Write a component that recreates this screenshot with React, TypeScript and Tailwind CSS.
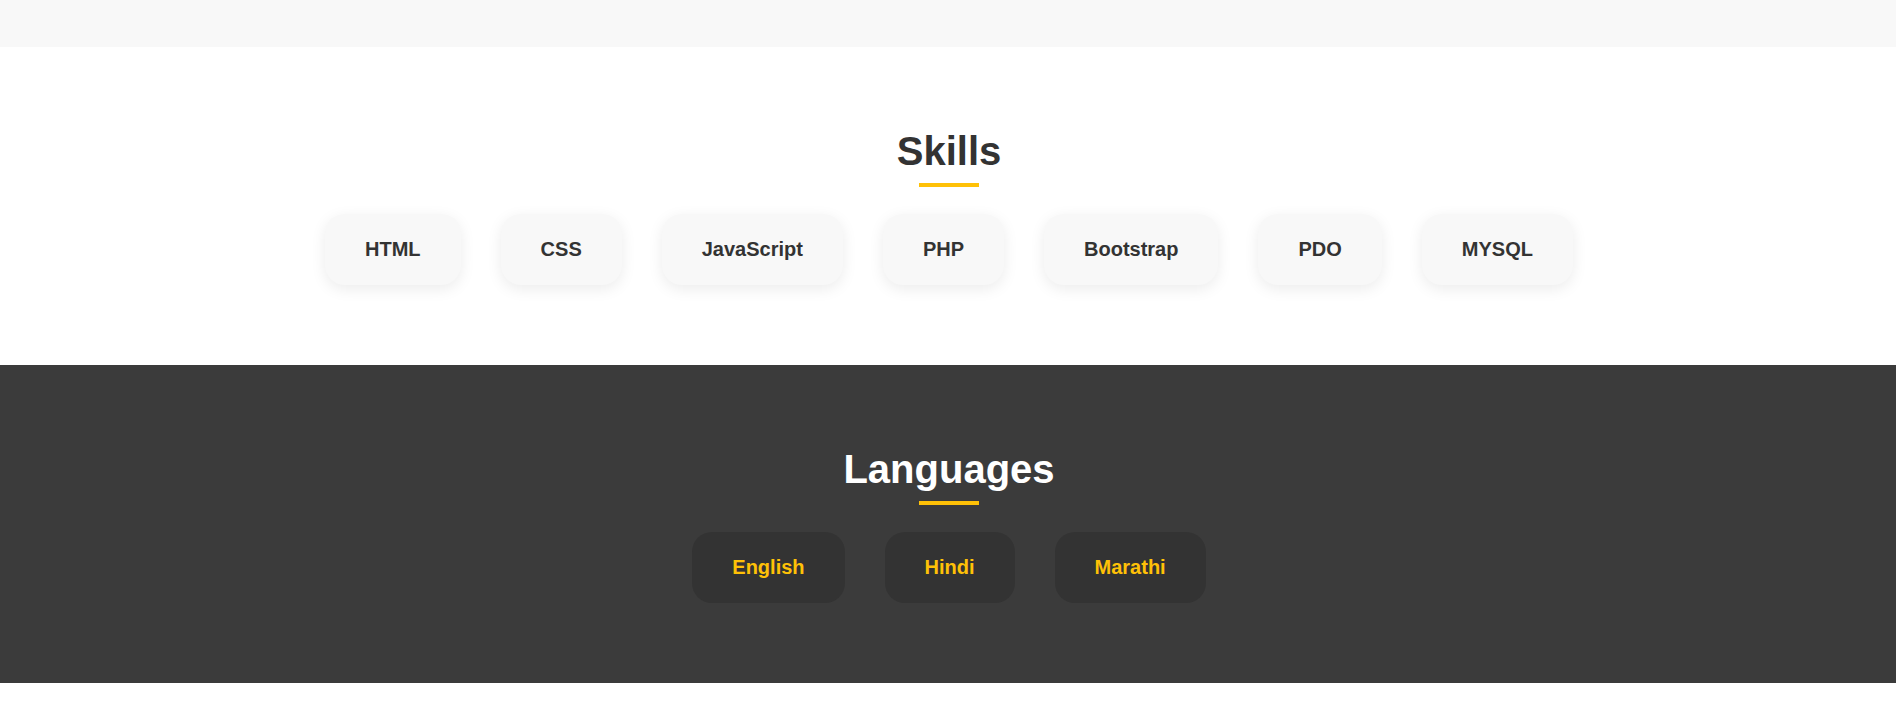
const skills = ['HTML', 'CSS', 'JavaScript', 'PHP', 'Bootstrap', 'PDO', 'MYSQL'];
const languages = ['English', 'Hindi', 'Marathi'];

function SectionTitle({ title, dark }: { title: string; dark?: boolean }) {
  return (
    <div className="flex flex-col items-center">
      <h2 className={`text-[40px] leading-[48px] font-bold ${dark ? 'text-white' : 'text-[#333333]'}`}>{title}</h2>
      <span className="mt-2 block h-1 w-[60px] bg-[#ffc107]" />
    </div>
  );
}

export default function App() {
  return (
    <div className="min-h-screen bg-white font-['Liberation_Sans',Arial,sans-serif]">
      {/* tail of the previous section */}
      <div className="h-[47px] bg-[#f8f8f8]" />

      {/* Skills */}
      <section className="bg-white pt-20 pb-[80px] pl-[2px]">
        <SectionTitle title="Skills" />
        <div className="mt-[27px] flex flex-wrap justify-center gap-10">
          {skills.map((s) => (
            <div
              key={s}
              className="rounded-[20px] bg-[#f8f8f8] px-10 py-5 text-[20px] leading-[31px] font-bold text-[#333333] shadow-[0_4px_15px_rgba(0,0,0,0.08)]"
            >
              {s}
            </div>
          ))}
        </div>
      </section>

      {/* Languages */}
      <section className="bg-[#3b3b3b] pt-20 pb-[80px] pl-[2px]">
        <SectionTitle title="Languages" dark />
        <div className="mt-[27px] flex flex-wrap justify-center gap-10">
          {languages.map((l) => (
            <div
              key={l}
              className="rounded-[20px] bg-[#333333] px-10 py-5 text-[20px] leading-[31px] font-bold text-[#ffc107]"
            >
              {l}
            </div>
          ))}
        </div>
      </section>

      <div className="h-[44px] bg-white" />
    </div>
  );
}
